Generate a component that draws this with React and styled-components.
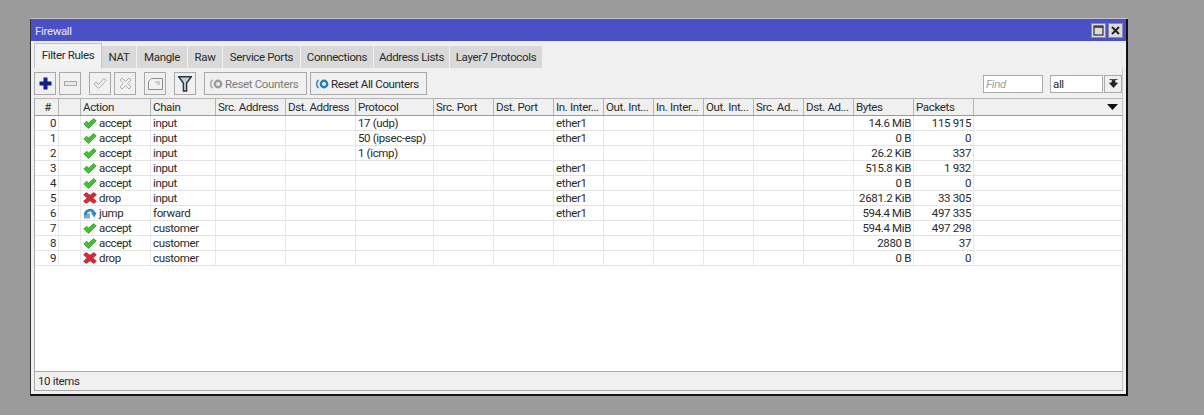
import { createGlobalStyle } from "styled-components";
import styled from "styled-components";

const Global = createGlobalStyle`
  html, body {
    margin: 0;
    padding: 0;
    background: #9b9b9b;
  }
  body {
    font-family: Roboto, "Liberation Sans", Arial, sans-serif;
    font-size: 11.5px;
    letter-spacing: -0.35px;
    color: #2a2a2a;
  }
`;

const Page = styled.div`
  width: 1204px;
  height: 415px;
  padding: 19px 0 0 30px;
  box-sizing: border-box;
  overflow: hidden;
`;

const Win = styled.div`
  width: 1098px;
  height: 377px;
  box-sizing: border-box;
  display: flex;
  flex-direction: column;
  background: #f0f0f0;
  border-left: 1px solid #333;
  border-right: 2px solid #111;
  border-bottom: 2px solid #111;
  box-shadow: 0 -1px 0 #c4c4c4;
`;

const TitleBar = styled.div`
  height: 22px;
  flex: none;
  display: flex;
  align-items: center;
  justify-content: space-between;
  padding: 0 3px 0 4px;
  background: #4b50c6;
  color: #e6e6f4;
`;

const TitleText = styled.span`
  padding-top: 2px;
`;

const WinButtons = styled.div`
  display: flex;
  gap: 2px;
`;

const WinButton = styled.div`
  width: 15px;
  height: 15px;
  box-sizing: border-box;
  background: #dcdcdc;
  border: 1px solid #8a8ab0;
  display: flex;
  align-items: center;
  justify-content: center;
`;

const Body = styled.div`
  flex: 1;
  display: flex;
  flex-direction: column;
  padding: 2px 3px 3px 3px;
  min-height: 0;
`;

const Tabs = styled.div`
  height: 25px;
  flex: none;
  display: flex;
  align-items: flex-end;
`;

const Tab = styled.div`
  width: ${(p) => p.$w}px;
  height: ${(p) => (p.$active ? 25 : 22)}px;
  box-sizing: border-box;
  margin-right: ${(p) => (p.$active ? 0 : 1)}px;
  padding-bottom: ${(p) => (p.$active ? 2 : 0)}px;
  display: flex;
  align-items: center;
  justify-content: center;
  background: ${(p) => (p.$active ? "#f2f2f2" : "#d9d9d9")};
  border: ${(p) => (p.$active ? "1px solid #c4c4c4" : "none")};
  border-bottom: none;
`;

const Toolbar = styled.div`
  height: 30px;
  flex: none;
  display: flex;
  align-items: center;
  padding-top: 1px;
  box-sizing: border-box;
  border-right: 1px solid #cfcfcf;
`;

const ToolButton = styled.div`
  width: ${(p) => p.$w || 22}px;
  height: 23px;
  box-sizing: border-box;
  flex: none;
  margin-left: ${(p) => p.$gap || 0}px;
  display: flex;
  align-items: center;
  justify-content: center;
  background: #f0f0f0;
  border: 1px solid #a9a9a9;
`;

const TextButton = styled(ToolButton)`
  justify-content: flex-start;
  padding-left: 4px;
  gap: 2px;
  color: ${(p) => (p.$muted ? "#7d7d7d" : "#2a2a2a")};
`;

const Spacer = styled.div`
  flex: 1;
`;

const Field = styled.div`
  width: ${(p) => p.$w}px;
  height: 18px;
  box-sizing: border-box;
  flex: none;
  margin-left: ${(p) => p.$gap || 0}px;
  padding-left: 2px;
  display: flex;
  align-items: center;
  background: #fff;
  border: 1px solid #ababab;
  color: ${(p) => (p.$hint ? "#a0a0a0" : "#2a2a2a")};
  font-style: ${(p) => (p.$hint ? "italic" : "normal")};
`;

const DropButton = styled.div`
  width: 18px;
  height: 18px;
  box-sizing: border-box;
  flex: none;
  margin-left: 1px;
  display: flex;
  align-items: center;
  justify-content: center;
  background: #f0f0f0;
  border: 1px solid #ababab;
`;

const Table = styled.div`
  flex: 1;
  min-height: 0;
  display: flex;
  flex-direction: column;
  background: #fff;
  border-left: 1px solid #a9a9a9;
  border-right: 1px solid #c4c4c4;
  border-bottom: 1px solid #a9a9a9;
`;

const Header = styled.div`
  display: flex;
  height: 18px;
  flex: none;
  box-sizing: border-box;
  background: #f0f0f0;
  border-top: 1px solid #b4b4b4;
  border-bottom: 1px solid #9a9a9a;
`;

const HeadCell = styled.div`
  width: ${(p) => p.$w}px;
  flex: ${(p) => (p.$fill ? 1 : "none")};
  box-sizing: border-box;
  padding-left: 2px;
  display: flex;
  align-items: center;
  justify-content: ${(p) => (p.$center ? "center" : p.$end ? "flex-end" : "flex-start")};
  padding-right: ${(p) => (p.$end ? 4 : 0)}px;
  border-right: ${(p) => (p.$fill ? "none" : "1px solid #b4b4b4")};
  white-space: nowrap;
  overflow: hidden;
`;

const Row = styled.div`
  display: flex;
  height: 15px;
  flex: none;
  box-sizing: border-box;
  border-bottom: 1px solid #e4e4e4;
`;

const Cell = styled.div`
  width: ${(p) => p.$w}px;
  flex: ${(p) => (p.$fill ? 1 : "none")};
  box-sizing: border-box;
  padding: ${(p) => (p.$right ? "0 2px 0 0" : "0 0 0 2px")};
  display: flex;
  align-items: center;
  justify-content: ${(p) => (p.$right ? "flex-end" : "flex-start")};
  gap: 2px;
  border-right: ${(p) => (p.$fill ? "none" : "1px solid #e8e8e8")};
  white-space: nowrap;
  overflow: hidden;
`;

const StatusBar = styled.div`
  height: 18px;
  flex: none;
  display: flex;
  align-items: center;
  padding-left: 3px;
  background: #f0f0f0;
  border-left: 1px solid #a9a9a9;
  border-right: 1px solid #c4c4c4;
  border-bottom: 1px solid #a9a9a9;
`;

const columns = [
  { key: "id", label: "#", w: 24, center: true, right: true },
  { key: "flag", label: "", w: 22 },
  { key: "action", label: "Action", w: 70 },
  { key: "chain", label: "Chain", w: 65 },
  { key: "src", label: "Src. Address", w: 70 },
  { key: "dst", label: "Dst. Address", w: 70 },
  { key: "proto", label: "Protocol", w: 78 },
  { key: "sport", label: "Src. Port", w: 60 },
  { key: "dport", label: "Dst. Port", w: 60 },
  { key: "inif", label: "In. Inter...", w: 50 },
  { key: "outif", label: "Out. Int...", w: 50 },
  { key: "inlist", label: "In. Inter...", w: 50 },
  { key: "outlist", label: "Out. Int...", w: 50 },
  { key: "srcl", label: "Src. Ad...", w: 50 },
  { key: "dstl", label: "Dst. Ad...", w: 50 },
  { key: "bytes", label: "Bytes", w: 60, right: true },
  { key: "packets", label: "Packets", w: 60, right: true },
];

const rows = [
  { id: 0, action: "accept", chain: "input", proto: "17 (udp)", inif: "ether1", bytes: "14.6 MiB", packets: "115 915" },
  { id: 1, action: "accept", chain: "input", proto: "50 (ipsec-esp)", inif: "ether1", bytes: "0 B", packets: "0" },
  { id: 2, action: "accept", chain: "input", proto: "1 (icmp)", bytes: "26.2 KiB", packets: "337" },
  { id: 3, action: "accept", chain: "input", inif: "ether1", bytes: "515.8 KiB", packets: "1 932" },
  { id: 4, action: "accept", chain: "input", inif: "ether1", bytes: "0 B", packets: "0" },
  { id: 5, action: "drop", chain: "input", inif: "ether1", bytes: "2681.2 KiB", packets: "33 305" },
  { id: 6, action: "jump", chain: "forward", inif: "ether1", bytes: "594.4 MiB", packets: "497 335" },
  { id: 7, action: "accept", chain: "customer", bytes: "594.4 MiB", packets: "497 298" },
  { id: 8, action: "accept", chain: "customer", bytes: "2880 B", packets: "37" },
  { id: 9, action: "drop", chain: "customer", bytes: "0 B", packets: "0" },
];

const tabs = [
  { label: "Filter Rules", w: 68, active: true },
  { label: "NAT", w: 34 },
  { label: "Mangle", w: 50 },
  { label: "Raw", w: 34 },
  { label: "Service Ports", w: 77 },
  { label: "Connections", w: 72 },
  { label: "Address Lists", w: 75 },
  { label: "Layer7 Protocols", w: 92 },
];

const ActionIcon = ({ type }) => {
  if (type === "accept") {
    return (
      <svg width="14" height="11" viewBox="0 0 14 11">
        <path d="M0.8 6 L3.6 3.2 L5.6 5 L10.8 0.6 L13.2 3 L5.6 10.4 Z" fill="#45c02f" stroke="#2a8a2c" strokeWidth="0.7" />
      </svg>
    );
  }
  if (type === "drop") {
    return (
      <svg width="14" height="12" viewBox="0 0 14 12">
        <path d="M0.6 2.8 L3.2 0.6 L7 3.2 L10.8 0.6 L13.4 2.8 L9.8 6 L13.4 9.2 L10.8 11.4 L7 8.8 L3.2 11.4 L0.6 9.2 L4.2 6 Z" fill="#d22c3a" stroke="#a51e2a" strokeWidth="0.7" />
      </svg>
    );
  }
  return (
    <svg width="14" height="11" viewBox="0 0 14 11">
      <rect x="1" y="5.5" width="6" height="5" fill="#7fa8c8" />
      <path d="M2 7 C3 1.5 9 0.5 11 5" fill="none" stroke="#2b86c8" strokeWidth="2.6" />
      <path d="M8 4.8 L13.6 4.2 L11.4 9.4 Z" fill="#2b86c8" />
    </svg>
  );
};

const ResetIcon = ({ muted }) => (
  <svg width="14" height="10" viewBox="0 0 14 10">
    <path d="M3.6 1 C1 2.8 1 7.2 3.6 9" fill="none" stroke={muted ? "#a8a8a8" : "#3c8fc4"} strokeWidth="1.6" />
    <circle cx="9" cy="5" r="3.2" fill="none" stroke={muted ? "#9a9a9a" : "#1f7fc0"} strokeWidth="2.4" />
  </svg>
);

const App = () => (
  <Page>
    <Global />
    <Win>
      <TitleBar>
        <TitleText>Firewall</TitleText>
        <WinButtons>
          <WinButton>
            <svg width="11" height="11" viewBox="0 0 11 11">
              <rect x="1" y="1" width="9" height="9" fill="none" stroke="#333" strokeWidth="1.2" />
              <path d="M1 2 H10" stroke="#333" strokeWidth="1.6" />
            </svg>
          </WinButton>
          <WinButton>
            <svg width="11" height="11" viewBox="0 0 11 11">
              <path d="M2 2 L9 9 M9 2 L2 9" stroke="#222" strokeWidth="2" />
            </svg>
          </WinButton>
        </WinButtons>
      </TitleBar>
      <Body>
        <Tabs>
          {tabs.map((t) => (
            <Tab key={t.label} $w={t.w} $active={t.active}>{t.label}</Tab>
          ))}
        </Tabs>
        <Toolbar>
          <ToolButton>
            <svg width="13" height="13" viewBox="0 0 13 13">
              <path d="M4.5 0.5 H8.5 V4.5 H12.5 V8.5 H8.5 V12.5 H4.5 V8.5 H0.5 V4.5 H4.5 Z" fill="#10208a" />
            </svg>
          </ToolButton>
          <ToolButton $gap={3}>
            <svg width="13" height="5" viewBox="0 0 13 5">
              <rect x="0.5" y="0.5" width="12" height="4" fill="#e8e8e8" stroke="#a8a8a8" />
            </svg>
          </ToolButton>
          <ToolButton $gap={8}>
            <svg width="14" height="13" viewBox="0 0 14 13">
              <path d="M1 7 L3 5 L5.5 7.5 L11 1.5 L13 3.5 L5.5 11.5 Z" fill="#f4f4f4" stroke="#ababab" />
            </svg>
          </ToolButton>
          <ToolButton $gap={3}>
            <svg width="13" height="13" viewBox="0 0 13 13">
              <path d="M1 3 L3 1 L6.5 4.5 L10 1 L12 3 L8.5 6.5 L12 10 L10 12 L6.5 8.5 L3 12 L1 10 L4.5 6.5 Z" fill="#f4f4f4" stroke="#ababab" />
            </svg>
          </ToolButton>
          <ToolButton $gap={8}>
            <svg width="15" height="12" viewBox="0 0 15 12">
              <path d="M0.5 11.5 V3.5 L3.5 0.5 H14.5 V11.5 Z" fill="#f2f2f2" stroke="#8c8c8c" />
              <path d="M7 4 H12 M9 6 H12" stroke="#a8a8a8" />
            </svg>
          </ToolButton>
          <ToolButton $gap={8}>
            <svg width="14" height="16" viewBox="0 0 14 16">
              <path d="M0.8 0.8 H13.2 L8.6 7 V15 H5.4 V7 Z" fill="#c8d0d8" stroke="#26323c" strokeWidth="1.4" />
            </svg>
          </ToolButton>
          <TextButton $gap={8} $w={103} $muted>
            <ResetIcon muted />
            Reset Counters
          </TextButton>
          <TextButton $gap={3} $w={117}>
            <ResetIcon />
            Reset All Counters
          </TextButton>
          <Spacer />
          <Field $w={60} $hint>Find</Field>
          <Field $w={53} $gap={7}>all</Field>
          <DropButton>
            <svg width="9" height="10" viewBox="0 0 9 10">
              <path d="M0.5 0.5 H8.5 M3 1.5 H6 V4 H8.5 L4.5 8.5 L0.5 4 H3 Z" fill="#222" stroke="#222" strokeWidth="0.8" />
            </svg>
          </DropButton>
        </Toolbar>
        <Table>
          <Header>
            {columns.map((c) => (
              <HeadCell key={c.key} $w={c.w} $center={c.center}>{c.label}</HeadCell>
            ))}
            <HeadCell $fill $end>
              <svg width="11" height="6" viewBox="0 0 11 6">
                <path d="M0 0 H11 L5.5 6 Z" fill="#111" />
              </svg>
            </HeadCell>
          </Header>
          {rows.map((r) => (
            <Row key={r.id}>
              {columns.map((c) => (
                <Cell key={c.key} $w={c.w} $right={c.right}>
                  {c.key === "action" && <ActionIcon type={r.action} />}
                  {r[c.key]}
                </Cell>
              ))}
              <Cell $fill />
            </Row>
          ))}
        </Table>
        <StatusBar>10 items</StatusBar>
      </Body>
    </Win>
  </Page>
);

export default App;
